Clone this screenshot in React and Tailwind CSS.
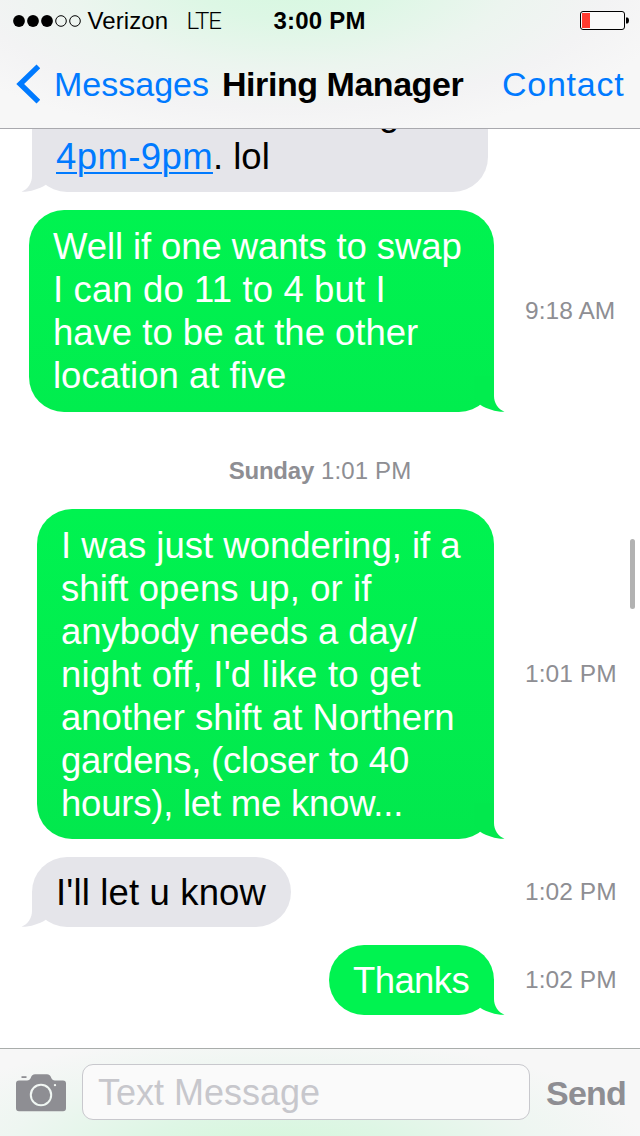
import React from 'react';
import clsx from 'clsx';

// --- Icons ---

const SignalDots = () => (
    <svg width="70" height="14" viewBox="0 0 70 14" className="shrink-0">
        <circle cx="7" cy="7" r="5.9" fill="#000" />
        <circle cx="21" cy="7" r="5.9" fill="#000" />
        <circle cx="35" cy="7" r="5.9" fill="#000" />
        <circle cx="49" cy="7" r="5.3" fill="none" stroke="#000" />
        <circle cx="63" cy="7" r="5.3" fill="none" stroke="#000" />
    </svg>
);

const Battery = () => (
    <svg width="50" height="20" viewBox="0 0 50 20" className="shrink-0">
        <rect x="0.5" y="0.5" width="44" height="18" rx="2.5" fill="#fafafa" stroke="#000" />
        <rect x="2" y="2" width="8" height="15" fill="#ff3b30" />
        <path d="M46 6.5h1.2c1.2 0 1.8 1.5 1.8 3s-.6 3-1.8 3H46z" fill="#000" />
    </svg>
);

const BackChevron = () => (
    <svg width="24" height="40" viewBox="0 0 24 40" className="shrink-0">
        <path d="M22.4 2.4L4.2 20L22.4 37.6" fill="none" stroke="#007aff" strokeWidth="5.4" />
    </svg>
);

const CameraIcon = () => (
    <svg width="50" height="38" viewBox="0 0 50 38" className="shrink-0" fill="#8e8e93">
        <path d="M5.5 2.2H10.5V4H5.5Z" />
        <path
            fillRule="evenodd"
            d="M3 6.500H11C13 6.500 14 5.500 14.700 4L15.200 2.800C16 1 17 .2 19 .2H31C33 .2 34 1 34.800 2.800L35.300 4C36 5.500 37 6.500 39 6.500H47A3 3 0 0 1 50 9.500V34.200A3 3 0 0 1 47 37.200H3A3 3 0 0 1 0 34.200V9.500A3 3 0 0 1 3 6.500ZM25 9.800A11.200 11.200 0 1 0 25 32.200A11.200 11.200 0 1 0 25 9.800ZM39 9.900A1.200 1.200 0 1 0 39 12.300A1.200 1.200 0 1 0 39 9.900Z"
        />
        <circle cx="25" cy="21" r="9.200" />
    </svg>
);

const Tail = ({ className }) => (
    <svg width="32" height="36" viewBox="0 0 32 36" fill="currentColor" className={clsx('absolute bottom-0', className)}>
        <path d="M20 0V20C20 27 24 33 30.5 35.800C22 36 13 33 6.500 29L0 20V0Z" />
    </svg>
);

// --- Messages ---

const Bubble = ({ sent, className, tail, lines, children }) => (
    <div
        className={clsx(
            'relative shrink-0 rounded-[35px] px-6 text-[36.5px] leading-[43px] whitespace-nowrap',
            sent ? 'text-white' : 'ml-8 bg-[#e5e5ea] text-black',
            className
        )}
    >
        {lines ? lines.map((line) => <div key={line.text} className={line.className}>{line.text}</div>) : children}
        <Tail className={sent ? clsx('-right-3', tail) : '-left-3 -scale-x-100 text-[#e5e5ea]'} />
    </div>
);

const Row = ({ time, sent, className, children }) => (
    <div className={clsx('flex items-center', className)}>
        <div className={clsx('flex w-[494px] shrink-0', sent && 'justify-end')}>{children}</div>
        {time && <div className="ml-[31px] text-[24.5px] tracking-[0.05px] whitespace-nowrap text-[#8e8e93]">{time}</div>}
    </div>
);

const swapLines = [
    { text: 'Well if one wants to swap', className: 'tracking-[-0.1px]' },
    { text: 'I can do 11 to 4 but I', className: 'tracking-[0.12px]' },
    { text: 'have to be at the other', className: '' },
    { text: 'location at five', className: '' },
];

const shiftLines = [
    { text: 'I was just wondering, if a', className: '' },
    { text: 'shift opens up, or if', className: 'tracking-[0.1px]' },
    { text: 'anybody needs a day/', className: 'tracking-[-0.05px]' },
    { text: "night off, I'd like to get", className: 'tracking-[0.25px]' },
    { text: 'another shift at Northern', className: '' },
    { text: 'gardens, (closer to 40', className: 'tracking-[-0.23px]' },
    { text: 'hours), let me know...', className: 'tracking-[-0.22px]' },
];

// --- Bars ---

const StatusBar = () => (
    <div className="flex h-10 items-center pt-px pr-2.5 pl-[11.5px] text-2xl leading-10 text-black">
        <SignalDots />
        <span className="ml-1.5 w-[99px] tracking-[0.1px]">Verizon</span>
        <span className="w-[87px] font-['Roboto'] font-light tracking-[-1px]">LTE</span>
        <span className="flex-1 font-bold tracking-[0.2px]">3:00 PM</span>
        <Battery />
    </div>
);

const NavBar = () => (
    <div className="flex h-22 items-center pl-4 text-[34px] whitespace-nowrap text-[#007aff]">
        <BackChevron />
        <span className="ml-3.5 w-[168px]">Messages</span>
        <span className="w-[280px] font-bold tracking-[-0.45px] text-black">Hiring Manager</span>
        <span className="tracking-[0.75px]">Contact</span>
    </div>
);

const InputBar = () => (
    <div className="flex h-[88px] shrink-0 items-center border-t border-[#a9adab] bg-[#f7f7f7] bg-[radial-gradient(ellipse_380px_120px_at_270px_105px,#d4f7da,#def6e5_35%,#eef6f1_70%,#f7f7f7)] pl-4">
        <CameraIcon />
        <div className="mb-0.5 ml-4 flex h-14 w-[448px] items-center rounded-[11px] border border-[#c8c8cd] bg-[#fafafa] pt-[3px] pl-[15px] text-4xl text-[#c7c7cc]">
            Text Message
        </div>
        <span className="ml-4 pt-0.5 text-[34px] font-bold tracking-[-0.8px] text-[#8e8e93]">Send</span>
    </div>
);

export default function App() {
    return (
        <div className="relative flex h-[1136px] w-[640px] flex-col overflow-hidden bg-white font-['Liberation_Sans',sans-serif]">
            <header className="h-[129px] shrink-0 border-b border-[#a9a9ae] bg-[#f7f7f7] bg-[radial-gradient(ellipse_400px_160px_at_290px_-20px,#d6f8e0,#ddf7e5_25%,#ecf5ef_55%,#f3f3f4_80%,#f7f7f7)]">
                <StatusBar />
                <NavBar />
            </header>

            <main className="flex flex-1 flex-col overflow-hidden">
                <Row className="-mt-[37px]">
                    <Bubble className="h-[100px] w-[456px]">
                        <div className="-mt-px mb-px pl-[323px]">g</div>
                        <div>
                            <span className="tracking-[0.4px] text-[#007aff] underline decoration-2 underline-offset-3">4pm-9pm</span>. lol
                        </div>
                    </Bubble>
                </Row>
                <Row sent time="9:18 AM" className="mt-[18px]">
                    <Bubble sent className="h-[202px] w-[465px] bg-linear-to-b from-[#00f350] to-[#01ed4e] pt-[15px]" tail="text-[#01ed4e]" lines={swapLines} />
                </Row>
                <div className="mt-[41px] h-9 text-center text-2xl leading-9 tracking-[0.15px] text-[#8e8e93]">
                    <span className="font-bold tracking-[-0.2px]">Sunday</span> 1:01 PM
                </div>
                <Row sent time="1:01 PM" className="mt-5">
                    <Bubble sent className="h-[330px] w-[457px] bg-linear-to-b from-[#00f350] to-[#02e84d] pt-[15px]" tail="text-[#02e84d]" lines={shiftLines} />
                </Row>
                <Row time="1:02 PM" className="mt-[18px]">
                    <Bubble className="mr-[203px] h-[70px] w-[259px] pt-[14px] tracking-[0.15px]">I'll let u know</Bubble>
                </Row>
                <Row sent time="1:02 PM" className="mt-[18px]">
                    <Bubble sent className="h-[70px] w-[165px] bg-[#00f350] pt-[14px] tracking-[-0.6px]" tail="text-[#00f350]">Thanks</Bubble>
                </Row>
            </main>

            <InputBar />

            {/* scroll indicator */}
            <div className="absolute top-[539px] right-[5px] h-[70px] w-[5px] rounded-full bg-[#b2b2b2]" />
        </div>
    );
}
